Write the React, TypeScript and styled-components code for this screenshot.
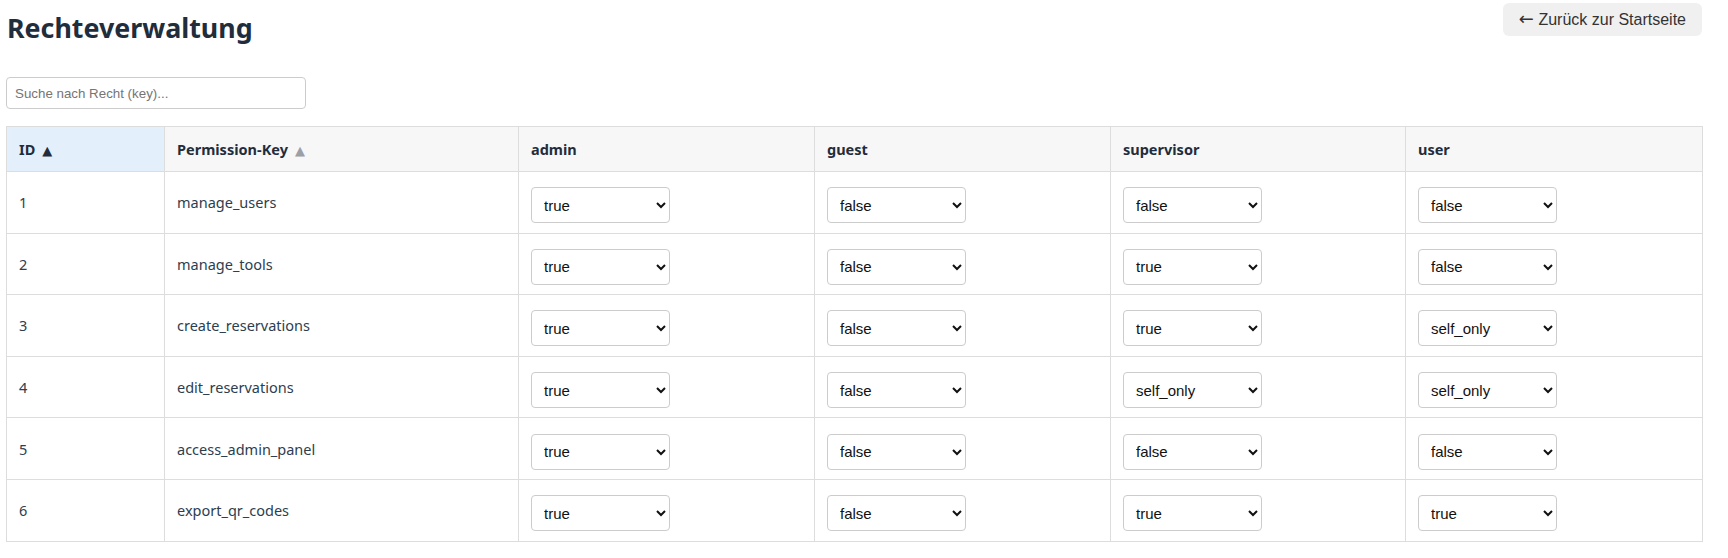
import React from "react";
import styled, { createGlobalStyle } from "styled-components";

const GlobalStyle = createGlobalStyle`
  html, body {
    margin: 0;
    padding: 0;
    background: #ffffff;
  }
  body {
    font-family: "Noto Sans", "Open Sans", Arial, sans-serif;
    color: #2c3e50;
  }
`;

const Page = styled.div`
  padding: 0 26px 0 6px;
`;

const Header = styled.header`
  display: flex;
  justify-content: space-between;
  align-items: flex-start;
`;

const Title = styled.h1`
  margin: 8px 0 0 1px;
  font-family: "Noto Sans", "Open Sans", sans-serif;
  font-size: 26.8px;
  font-weight: 700;
  line-height: 39px;
  color: #1f2d3d;
`;

const BackButton = styled.button`
  margin-top: 3px;
  height: 33px;
  padding: 0 16px;
  border: none;
  border-radius: 6px;
  background: #f0f0f0;
  color: #333333;
  font-family: "Liberation Sans", Arial, sans-serif;
  font-size: 16px;
  cursor: pointer;
`;

const Arrow = styled.span`
  font-family: "DejaVu Sans", sans-serif;
  font-size: 18px;
  line-height: 1;
`;

const SearchInput = styled.input`
  display: block;
  box-sizing: border-box;
  margin-top: 30px;
  width: 300px;
  height: 32px;
  padding: 0 8px;
  border: 1px solid #cccccc;
  border-radius: 4px;
  font-family: "Liberation Sans", Arial, sans-serif;
  font-size: 13.333px;
  color: #333333;
  &::placeholder {
    color: #757575;
  }
`;

const Table = styled.table`
  margin-top: 17px;
  width: 100%;
  table-layout: fixed;
  border-collapse: collapse;
  border: 1px solid #dddddd;
`;

const Col = styled.col<{ $w: number }>`
  width: ${(p) => p.$w}px;
`;

const Th = styled.th<{ $active?: boolean }>`
  padding: 12px 12px;
  height: 19px;
  text-align: left;
  font-size: 14.5px;
  font-weight: 700;
  color: #1f2d3d;
  background: ${(p) => (p.$active ? "#e3f0fb" : "#f7f7f7")};
  border: 1px solid #dddddd;
  white-space: nowrap;
`;

const SortArrow = styled.span<{ $active?: boolean }>`
  margin-left: 7px;
  font-family: "DejaVu Sans", sans-serif;
  font-size: 13px;
  color: ${(p) => (p.$active ? "#1f2d3d" : "#9aa0a6")};
`;

const Td = styled.td`
  padding: 12px 12px;
  height: 36.6px;
  font-size: 14.5px;
  color: #2c3e50;
  border: 1px solid #dddddd;
  vertical-align: middle;
`;

const Select = styled.select`
  display: block;
  box-sizing: border-box;
  margin-top: 3px;
  margin-bottom: -3px;
  width: 139px;
  height: 36px;
  padding: 0 8px;
  border: 1px solid #cccccc;
  border-radius: 4px;
  background: #ffffff;
  font-family: "Liberation Sans", Arial, sans-serif;
  font-size: 15px;
  color: #111111;
`;

type Val = "true" | "false" | "self_only";

const roles = ["admin", "guest", "supervisor", "user"] as const;

const rows: { id: number; key: string; vals: Val[] }[] = [
  { id: 1, key: "manage_users", vals: ["true", "false", "false", "false"] },
  { id: 2, key: "manage_tools", vals: ["true", "false", "true", "false"] },
  { id: 3, key: "create_reservations", vals: ["true", "false", "true", "self_only"] },
  { id: 4, key: "edit_reservations", vals: ["true", "false", "self_only", "self_only"] },
  { id: 5, key: "access_admin_panel", vals: ["true", "false", "false", "false"] },
  { id: 6, key: "export_qr_codes", vals: ["true", "false", "true", "true"] },
];

const widths = [158, 354, 296, 296, 295, 297];

export default function App() {
  return (
    <Page>
      <GlobalStyle />
      <Header>
        <Title>Rechteverwaltung</Title>
        <BackButton>
          <Arrow>←</Arrow> Zurück zur Startseite
        </BackButton>
      </Header>
      <SearchInput placeholder="Suche nach Recht (key)..." />
      <Table>
        <colgroup>
          {widths.map((w, i) => (
            <Col key={i} $w={w} />
          ))}
        </colgroup>
        <thead>
          <tr>
            <Th $active>
              ID<SortArrow $active>▲</SortArrow>
            </Th>
            <Th>
              Permission-Key<SortArrow>▲</SortArrow>
            </Th>
            {roles.map((r) => (
              <Th key={r}>{r}</Th>
            ))}
          </tr>
        </thead>
        <tbody>
          {rows.map((row) => (
            <tr key={row.id}>
              <Td>{row.id}</Td>
              <Td>{row.key}</Td>
              {row.vals.map((v, i) => (
                <Td key={roles[i]}>
                  <Select defaultValue={v}>
                    <option value="true">true</option>
                    <option value="false">false</option>
                    <option value="self_only">self_only</option>
                  </Select>
                </Td>
              ))}
            </tr>
          ))}
        </tbody>
      </Table>
    </Page>
  );
}
